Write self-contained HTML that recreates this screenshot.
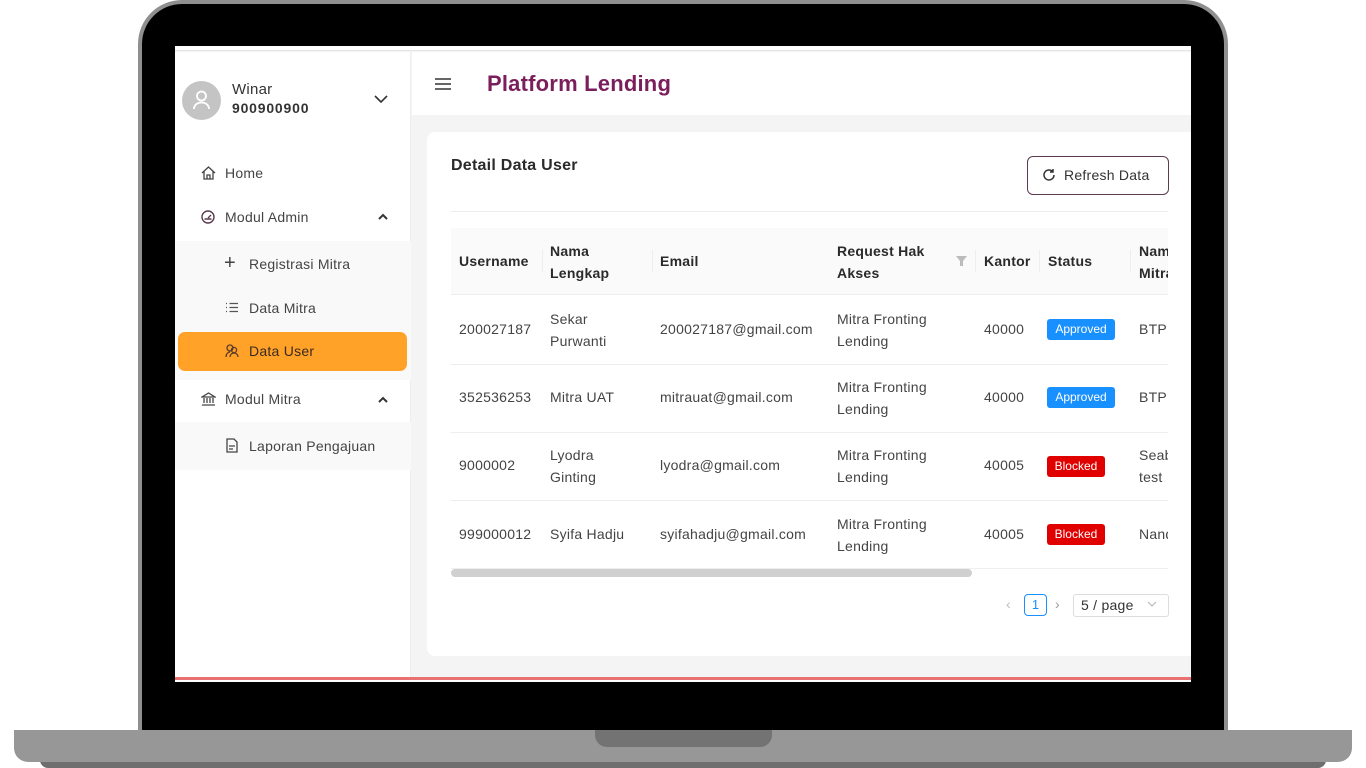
<!DOCTYPE html>
<html><head><meta charset="utf-8"><style>
*{margin:0;padding:0;box-sizing:border-box}
body{width:1366px;height:768px;background:#fff;position:relative;overflow:hidden;font-family:"Liberation Sans",sans-serif;color:#333}
.a{position:absolute}
.t{position:absolute;white-space:nowrap;font-size:14px;color:#444;letter-spacing:.25px}
.h{font-weight:bold;color:#2a2a2a;font-size:14px}
.badge{position:absolute;height:21px;border-radius:3px;color:#fff;font-size:12px;line-height:21px;text-align:center}
.hl{position:absolute;height:1px;background:#eee}
</style></head><body>
<div class="a" style="left:138px;top:0;width:1090px;height:740px;background:#8f8f8f;border-radius:44px 44px 0 0"></div>
<div class="a" style="left:142px;top:4px;width:1082px;height:736px;background:#000;border-radius:40px 40px 0 0"></div>
<div class="a" style="left:40px;top:755px;width:1286px;height:13px;background:#6e6e6e;border-radius:0 0 8px 8px"></div>
<div class="a" style="left:14px;top:730px;width:1338px;height:32px;background:#979797;border-radius:0 0 14px 14px"></div>
<div class="a" style="left:595px;top:730px;width:177px;height:17px;background:#737373;border-radius:0 0 12px 12px"></div>
<div class="a" style="left:175px;top:46px;width:1016px;height:636px;background:#f4f4f4;overflow:hidden">
</div>
<div class="a" style="left:175px;top:46px;width:1016px;height:5px;background:#fff;border-bottom:1px solid #e6e6e6"></div>
<div class="a" style="left:175px;top:677px;width:1016px;height:3px;background:#e87070"></div>
<div class="a" style="left:175px;top:680px;width:1016px;height:2px;background:#fff"></div>
<div class="a" style="left:175px;top:52px;width:236px;height:625px;background:#fff;border-right:1px solid #eee"></div>
<div class="a" style="left:182px;top:81px;width:39px;height:39px;border-radius:50%;background:#c4c4c4"></div>
<svg class="a" style="left:191px;top:89px" width="21" height="22" viewBox="0 0 21 22" fill="none" stroke="#fff" stroke-width="1.8"><circle cx="10.5" cy="7" r="4.5"/><path d="M3 20c0-4 3.5-6.5 7.5-6.5S18 16 18 20"/></svg>
<div class="t" style="left:232px;top:81px;font-size:15px;color:#333">Winar</div>
<div class="t" style="left:232px;top:100px;font-weight:bold;color:#333;font-size:14px;letter-spacing:.8px">900900900</div>
<svg class="a" style="left:374px;top:94px" width="14" height="10" viewBox="0 0 14 10" fill="none" stroke="#333" stroke-width="1.6"><path d="M1 2l6 6 6-6"/></svg>
<svg class="a" style="left:201px;top:166px" width="15" height="14" viewBox="0 0 15 14" fill="none" stroke="#444" stroke-width="1.3"><path d="M1 7L7.5 1 14 7M3 5.5V13h9V5.5M6 13V9h3v4"/></svg>
<div class="t" style="left:225px;top:165px">Home</div>
<svg class="a" style="left:201px;top:210px" width="14" height="14" viewBox="0 0 14 14" fill="none" stroke="#5a3a4f" stroke-width="1.4"><circle cx="7" cy="7" r="6"/><path d="M7 8l3-3M3.5 9h7"/></svg>
<div class="t" style="left:225px;top:209px">Modul Admin</div>
<svg class="a" style="left:378px;top:213px" width="10" height="7" viewBox="0 0 10 7" fill="none" stroke="#333" stroke-width="2"><path d="M1 6l4-4 4 4"/></svg>
<div class="a" style="left:175px;top:241px;width:236px;height:139px;background:#f9f9f9"></div>
<div class="t" style="left:224px;top:253px;font-size:20px;color:#444;line-height:20px">+</div>
<div class="t" style="left:249px;top:256px">Registrasi Mitra</div>
<svg class="a" style="left:225px;top:302px" width="14" height="11" viewBox="0 0 14 11" stroke="#555" stroke-width="1.3"><path d="M1 1.5h1M1 5.5h1M1 9.5h1M4.5 1.5H13M4.5 5.5H13M4.5 9.5H13"/></svg>
<div class="t" style="left:249px;top:300px">Data Mitra</div>
<div class="a" style="left:178px;top:332px;width:229px;height:39px;background:#ffa227;border-radius:7px"></div>
<svg class="a" style="left:225px;top:344px" width="15" height="14" viewBox="0 0 15 14" fill="none" stroke="#5a3a2a" stroke-width="1.3"><circle cx="5" cy="4" r="3"/><path d="M1 13c0-3 2-5 4-5"/><circle cx="9" cy="6" r="2.6"/><path d="M5 13c0-2.5 2-4 4-4s4 1.5 4 4"/></svg>
<div class="t" style="left:249px;top:343px;color:#3a2a20">Data User</div>
<svg class="a" style="left:201px;top:392px" width="15" height="14" viewBox="0 0 15 14" fill="none" stroke="#444" stroke-width="1.3"><path d="M1 5L7.5 1 14 5H1zM3 6v5M6 6v5M9 6v5M12 6v5M1 13h13"/></svg>
<div class="t" style="left:225px;top:391px">Modul Mitra</div>
<svg class="a" style="left:378px;top:396px" width="10" height="7" viewBox="0 0 10 7" fill="none" stroke="#333" stroke-width="2"><path d="M1 6l4-4 4 4"/></svg>
<div class="a" style="left:175px;top:422px;width:236px;height:48px;background:#f9f9f9"></div>
<svg class="a" style="left:226px;top:438px" width="12" height="15" viewBox="0 0 12 15" fill="none" stroke="#444" stroke-width="1.3"><path d="M1 1h7l3 3v10H1zM3 8h6M3 11h4"/></svg>
<div class="t" style="left:249px;top:438px">Laporan Pengajuan</div>
<div class="a" style="left:412px;top:52px;width:779px;height:63px;background:#fff"></div>
<svg class="a" style="left:435px;top:77px" width="16" height="14" viewBox="0 0 16 14" stroke="#333" stroke-width="1.6"><path d="M0 2h16M0 7h16M0 12h16"/></svg>
<div class="t" style="left:487px;top:71px;font-size:22px;font-weight:bold;color:#7a1f5c;letter-spacing:.2px">Platform Lending</div>
<div class="a" style="left:427px;top:132px;width:764px;height:524px;background:#fff;border-radius:8px 0 0 8px"></div>
<div class="t" style="left:451px;top:157px;font-size:16px;font-weight:bold;color:#2a2a2a">Detail Data User</div>
<div class="a" style="left:1027px;top:156px;width:142px;height:39px;border:1px solid #5c3a4f;border-radius:6px"></div>
<svg class="a" style="left:1042px;top:168px" width="14" height="14" viewBox="0 0 14 14" fill="none" stroke="#333" stroke-width="1.5"><path d="M12 7a5 5 0 1 1-1.5-3.6M11 1v3h-3"/></svg>
<div class="t" style="left:1064px;top:167px;color:#333">Refresh Data</div>
<div class="hl" style="left:451px;top:211px;width:717px"></div>
<div class="a" style="left:451px;top:228px;width:717px;height:67px;background:#fafafa;border-bottom:1px solid #eee"></div>
<div class="a" style="left:542px;top:250px;width:1px;height:22px;background:#eee"></div>
<div class="a" style="left:652px;top:250px;width:1px;height:22px;background:#eee"></div>
<div class="a" style="left:975px;top:250px;width:1px;height:22px;background:#eee"></div>
<div class="a" style="left:1039px;top:250px;width:1px;height:22px;background:#eee"></div>
<div class="a" style="left:1130px;top:250px;width:1px;height:22px;background:#eee"></div>
<div class="t h" style="left:459px;top:253px">Username</div>
<div class="t h" style="left:550px;top:240px;line-height:22px">Nama<br>Lengkap</div>
<div class="t h" style="left:660px;top:253px">Email</div>
<div class="t h" style="left:837px;top:240px;line-height:22px">Request Hak<br>Akses</div>
<svg class="a" style="left:956px;top:256px" width="11" height="10" viewBox="0 0 11 10" fill="#bbb"><path d="M0 0h11L7 5v5H4V5z"/></svg>
<div class="t h" style="left:984px;top:253px">Kantor</div>
<div class="t h" style="left:1048px;top:253px">Status</div>
<div class="t h" style="left:1139px;top:240px;line-height:22px;width:29px;overflow:hidden">Nama<br>Mitra</div>
<div class="hl" style="left:451px;top:364px;width:717px"></div>
<div class="hl" style="left:451px;top:432px;width:717px"></div>
<div class="hl" style="left:451px;top:500px;width:717px"></div>
<div class="hl" style="left:451px;top:568px;width:717px"></div>
<div class="t" style="left:459px;top:321px">200027187</div>
<div class="t" style="left:550px;top:308px;line-height:22px">Sekar<br>Purwanti</div>
<div class="t" style="left:660px;top:321px">200027187@gmail.com</div>
<div class="t" style="left:837px;top:308px;line-height:22px">Mitra Fronting<br>Lending</div>
<div class="t" style="left:984px;top:321px">40000</div>
<div class="badge" style="left:1047px;top:319px;width:68px;background:#1890ff">Approved</div>
<div class="t" style="left:1139px;top:321px;width:29px;overflow:hidden">BTPN</div>
<div class="t" style="left:459px;top:389px">352536253</div>
<div class="t" style="left:550px;top:389px">Mitra UAT</div>
<div class="t" style="left:660px;top:389px">mitrauat@gmail.com</div>
<div class="t" style="left:837px;top:376px;line-height:22px">Mitra Fronting<br>Lending</div>
<div class="t" style="left:984px;top:389px">40000</div>
<div class="badge" style="left:1047px;top:387px;width:68px;background:#1890ff">Approved</div>
<div class="t" style="left:1139px;top:389px;width:29px;overflow:hidden">BTPN</div>
<div class="t" style="left:459px;top:457px">9000002</div>
<div class="t" style="left:550px;top:444px;line-height:22px">Lyodra<br>Ginting</div>
<div class="t" style="left:660px;top:457px">lyodra@gmail.com</div>
<div class="t" style="left:837px;top:444px;line-height:22px">Mitra Fronting<br>Lending</div>
<div class="t" style="left:984px;top:457px">40005</div>
<div class="badge" style="left:1047px;top:456px;width:58px;background:#e00000">Blocked</div>
<div class="t" style="left:1139px;top:444px;line-height:22px;width:29px;overflow:hidden">Seabank<br>test</div>
<div class="t" style="left:459px;top:526px">999000012</div>
<div class="t" style="left:550px;top:526px">Syifa Hadju</div>
<div class="t" style="left:660px;top:526px">syifahadju@gmail.com</div>
<div class="t" style="left:837px;top:513px;line-height:22px">Mitra Fronting<br>Lending</div>
<div class="t" style="left:984px;top:526px">40005</div>
<div class="badge" style="left:1047px;top:524px;width:58px;background:#e00000">Blocked</div>
<div class="t" style="left:1139px;top:526px;width:29px;overflow:hidden">Nanda</div>
<div class="a" style="left:451px;top:569px;width:521px;height:8px;background:#d0d0d0;border-radius:4px"></div>
<div class="t" style="left:1006px;top:596px;color:#bbb">‹</div>
<div class="a" style="left:1024px;top:594px;width:23px;height:22px;border:1px solid #1890ff;border-radius:4px;color:#1890ff;font-size:13px;text-align:center;line-height:20px">1</div>
<div class="t" style="left:1055px;top:596px;color:#999">›</div>
<div class="a" style="left:1073px;top:594px;width:96px;height:23px;border:1px solid #ddd;border-radius:3px"></div>
<div class="t" style="left:1081px;top:597px;color:#333">5 / page</div>
<svg class="a" style="left:1147px;top:601px" width="10" height="7" viewBox="0 0 10 7" fill="none" stroke="#bbb" stroke-width="1.2"><path d="M1 1l4 4 4-4"/></svg>
</body></html>
